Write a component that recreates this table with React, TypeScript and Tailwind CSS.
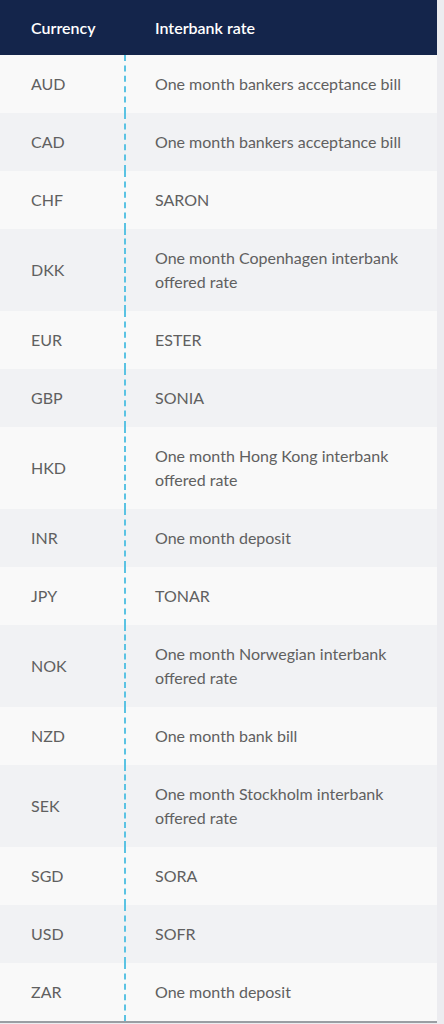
import React from "react";

const rows: [string, string][] = [
  ["AUD", "One month bankers acceptance bill"],
  ["CAD", "One month bankers acceptance bill"],
  ["CHF", "SARON"],
  ["DKK", "One month Copenhagen interbank offered rate"],
  ["EUR", "ESTER"],
  ["GBP", "SONIA"],
  ["HKD", "One month Hong Kong interbank offered rate"],
  ["INR", "One month deposit"],
  ["JPY", "TONAR"],
  ["NOK", "One month Norwegian interbank offered rate"],
  ["NZD", "One month bank bill"],
  ["SEK", "One month Stockholm interbank offered rate"],
  ["SGD", "SORA"],
  ["USD", "SOFR"],
  ["ZAR", "One month deposit"],
];

export default function App() {
  return (
    <div className="min-h-[1024px] w-[444px] bg-[#ececf0] font-['Lato','Noto_Sans',sans-serif]">
      <div className="w-[437px] border-b-2 border-[#9a9ea3]">
        <div className="flex h-[55px] items-center bg-[#14254b] text-[16px] font-semibold text-white">
          <div className="w-[126px] pl-[31px]">Currency</div>
          <div className="pl-[29px]">Interbank rate</div>
        </div>
        {rows.map(([c, r], i) => (
          <div
            key={c}
            className={`flex text-[16px] leading-6 text-[#606060] ${
              i % 2 === 0 ? "bg-[#f9f9f9]" : "bg-[#f1f2f4]"
            }`}
          >
            <div className="flex w-[126px] shrink-0 items-center border-r-2 border-dashed border-[#5bc3e3] py-[17px] pl-[31px]">
              {c}
            </div>
            <div className="flex-1 py-[17px] pl-[29px] pr-[20px]">{r}</div>
          </div>
        ))}
      </div>
    </div>
  );
}
